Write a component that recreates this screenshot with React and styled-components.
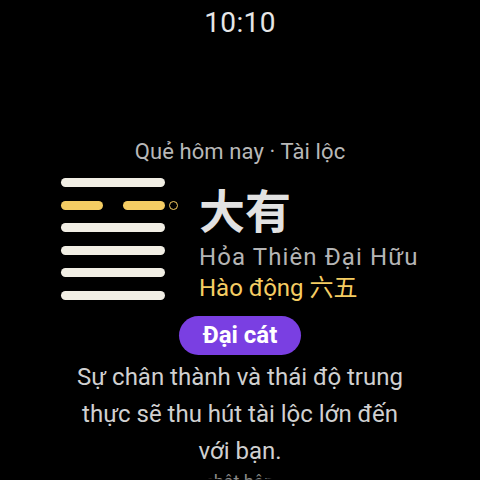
import React from "react";
import styled, { createGlobalStyle } from "styled-components";

const GlobalStyle = createGlobalStyle`
  html, body {
    margin: 0;
    padding: 0;
    background: #000;
  }
  body {
    font-family: Roboto, "Noto Sans", "Noto Sans CJK SC", sans-serif;
  }
`;

const WHITE_LINE = "#f1eee4";
const YELLOW = "#f5cd63";

const Screen = styled.div`
  width: 480px;
  height: 480px;
  border-radius: 50%;
  overflow: hidden;
  background: #000;
  display: flex;
  flex-direction: column;
  align-items: center;

  & > * {
    flex-shrink: 0;
  }
`;

const Clock = styled.div`
  margin-top: 7px;
  font-size: 28px;
  line-height: 32px;
  font-weight: 400;
  color: #e6e6e6;
  letter-spacing: 0.4px;
`;

const Caption = styled.div`
  margin-top: 100px;
  font-size: 22px;
  line-height: 26px;
  color: #b8b8b8;
  letter-spacing: 0.1px;
`;

const Hero = styled.div`
  align-self: stretch;
  display: flex;
  align-items: flex-start;
  gap: 21px;
  margin-top: 13px;
  padding-left: 61px;
`;

const Hexagram = styled.div`
  display: flex;
  flex-direction: column;
  gap: 13.6px;
`;

const LineRow = styled.div`
  display: flex;
  align-items: center;
  gap: 4px;
`;

const Bar = styled.div`
  width: 104px;
  height: 9px;
  display: flex;
  justify-content: space-between;
`;

const Segment = styled.div`
  height: 9px;
  border-radius: 4.5px;
  width: ${(p) => (p.$half ? "42px" : "104px")};
  background: ${(p) => (p.$moving ? YELLOW : WHITE_LINE)};
`;

const Marker = styled.div`
  width: 9px;
  height: 9px;
  box-sizing: border-box;
  border-radius: 50%;
  border: ${(p) => (p.$on ? `1.6px solid ${YELLOW}` : "none")};
`;

const TextCol = styled.div`
  display: flex;
  flex-direction: column;
`;

const Title = styled.div`
  font-family: "Noto Sans CJK SC", "Noto Sans CJK JP", sans-serif;
  font-size: 46px;
  line-height: 60px;
  font-weight: 700;
  color: #e2e2e2;
  margin-bottom: 4px;
`;

const Name = styled.div`
  font-size: 24px;
  line-height: 31px;
  color: ${(p) => (p.$accent ? YELLOW : "#b5b5b5")};
  letter-spacing: ${(p) => (p.$accent ? "0" : "1.1px")};
  white-space: nowrap;
`;

const Verdict = styled.div`
  margin-top: 11.5px;
  height: 39px;
  padding: 0 24px;
  border-radius: 20px;
  background: #7a3fe2;
  color: #fff;
  font-size: 24px;
  font-weight: 700;
  display: flex;
  align-items: center;
`;

const Description = styled.p`
  margin: 4px 0 0;
  width: 348px;
  text-align: center;
  font-size: 24px;
  line-height: 37px;
  color: #d0d0d0;
`;

const Footnote = styled.div`
  font-size: 18px;
  line-height: 24px;
  color: #8a8a8a;
`;

const lines = [
  { yin: false },
  { yin: true, moving: true },
  { yin: false },
  { yin: false },
  { yin: false },
  { yin: false },
];

function HexLine({ yin, moving }) {
  return (
    <LineRow>
      <Bar>
        {yin ? (
          <>
            <Segment $half $moving={moving} />
            <Segment $half $moving={moving} />
          </>
        ) : (
          <Segment $moving={moving} />
        )}
      </Bar>
      <Marker $on={moving} />
    </LineRow>
  );
}

export default function App() {
  return (
    <>
      <GlobalStyle />
      <Screen>
        <Clock>10:10</Clock>
        <Caption>Quẻ hôm nay · Tài lộc</Caption>
        <Hero>
          <Hexagram>
            {lines.map((l, i) => (
              <HexLine key={i} yin={l.yin} moving={l.moving} />
            ))}
          </Hexagram>
          <TextCol>
            <Title>大有</Title>
            <Name>Hỏa Thiên Đại Hữu</Name>
            <Name $accent>Hào động 六五</Name>
          </TextCol>
        </Hero>
        <Verdict>Đại cát</Verdict>
        <Description>
          Sự chân thành và thái độ trung thực sẽ thu hút tài lộc lớn đến với
          bạn.
        </Description>
        <Footnote>Cập nhật hôm nay</Footnote>
      </Screen>
    </>
  );
}
